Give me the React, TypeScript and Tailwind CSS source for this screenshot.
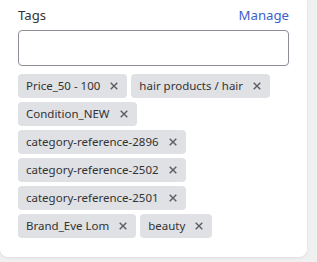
import React from "react";

const tags = [
  "Price_50 - 100",
  "hair products / hair",
  "Condition_NEW",
  "category-reference-2896",
  "category-reference-2502",
  "category-reference-2501",
  "Brand_Eve Lom",
  "beauty",
];

const CloseIcon = () => (
  <svg width="8" height="8" viewBox="0 0 8 8" className="shrink-0">
    <path d="M0.7 0.7L7.3 7.3M7.3 0.7L0.7 7.3" stroke="#5a5e63" strokeWidth="1.4" />
  </svg>
);

const App = () => {
  return (
    <div className="h-[262px] w-[317px] bg-[#f0f0f0] font-['Noto_Sans',sans-serif]">
      <div className="w-[307px] rounded-b-lg bg-white px-[18px] pb-[19px] pt-[5px] shadow-[0_1px_3px_rgba(0,0,0,0.08)]">
        <div className="flex items-center justify-between text-[13.2px] leading-5">
          <span className="text-[#333]">Tags</span>
          <a className="text-[#3b60cc]">Manage</a>
        </div>
        <input className="mt-[5px] block h-[36px] w-full rounded-[4px] border border-[#8c9096] bg-white" />
        <div className="mt-2 flex flex-wrap gap-1">
          {tags.map((t) => (
            <span
              key={t}
              className="flex h-6 items-center gap-[10px] rounded-[4px] bg-[#dfe1e5] pl-2 pr-[9px] text-[11.5px] leading-6 text-[#333]"
            >
              {t}
              <CloseIcon />
            </span>
          ))}
        </div>
      </div>
    </div>
  );
};

export default App;
